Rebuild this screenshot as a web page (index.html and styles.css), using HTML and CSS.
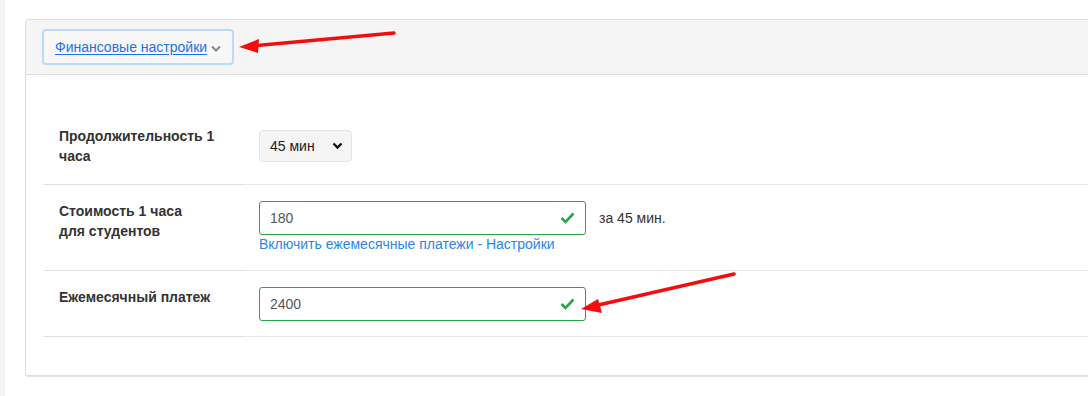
FILE: index.html
```html
<!DOCTYPE html>
<html lang="ru">
<head>
    <meta charset="UTF-8">
    <title>Финансовые настройки</title>
    <link rel="stylesheet" href="styles.css">
</head>
<body>

    <div class="strip"></div>

    <div class="main">
        <div class="card">
            <div class="card-header">
                <button class="toggle">
                    <span class="toggle-text">Финансовые настройки</span>
                    <svg class="toggle-caret" width="10" height="7" viewBox="0 0 10 7"><path d="M1 1.5 L5 5.5 L9 1.5" fill="none" stroke="#888" stroke-width="2"/></svg>
                </button>
            </div>

            <div class="card-body">
                <table class="settings">
                    <tr class="first">
                        <th>Продолжительность 1<br>часа</th>
                        <td>
                            <div class="select">
                                <span>45 мин</span>
                                <svg width="11" height="8" viewBox="0 0 11 8"><path d="M1.5 1.5 L5.5 5.5 L9.5 1.5" fill="none" stroke="#111" stroke-width="2.4"/></svg>
                            </div>
                        </td>
                    </tr>
                    <tr>
                        <th>Стоимость 1 часа<br>для студентов</th>
                        <td>
                            <div class="field-line">
                                <div class="field">
                                    <span>180</span>
                                    <svg class="check" width="15" height="12" viewBox="0 0 15 12"><path d="M1.5 6 L5.5 10 L13.5 1.5" fill="none" stroke="#28a745" stroke-width="2.6"/></svg>
                                </div>
                                <span class="suffix">за 45 мин.</span>
                            </div>
                            <a class="hint" href="#">Включить ежемесячные платежи - Настройки</a>
                        </td>
                    </tr>
                    <tr class="last">
                        <th>Ежемесячный платеж</th>
                        <td>
                            <div class="field">
                                <span>2400</span>
                                <svg class="check" width="15" height="12" viewBox="0 0 15 12"><path d="M1.5 6 L5.5 10 L13.5 1.5" fill="none" stroke="#28a745" stroke-width="2.6"/></svg>
                            </div>
                        </td>
                    </tr>
                </table>
            </div>
        </div>
    </div>

    <!-- annotation arrows -->
    <svg class="arrows" width="1088" height="396" viewBox="0 0 1088 396">
        <line x1="394" y1="33" x2="252" y2="46" stroke="#f40d0d" stroke-width="3.5" stroke-linecap="round"/>
        <polygon points="239,47 259,39 258,53" fill="#f40d0d"/>
        <line x1="734" y1="274" x2="594" y2="306" stroke="#f40d0d" stroke-width="3.5" stroke-linecap="round"/>
        <polygon points="581,309 598,299 602,313" fill="#f40d0d"/>
    </svg>

</body>
</html>
```

FILE: styles.css
```css
body {
    margin: 0;
    font-family: 'Liberation Sans', Arial, sans-serif;
    font-size: 14px;
    color: #333;
    background: #fff;
    display: flex;
    height: 396px;
    overflow: hidden;
}
.strip {
    width: 5px;
    background: #f4f4f4;
    flex-shrink: 0;
}
.main {
    flex: 1;
    padding: 19px 0 0 20px;
}
.card {
    margin-right: -10px;
    border: 1px solid #ddd;
    border-radius: 3px;
    box-shadow: 0 1px 0 #e4e4e4;
}
.card-header {
    height: 55px;
    box-sizing: border-box;
    padding: 9px 16px;
    background: #f5f5f5;
    border-bottom: 1px solid #ddd;
}
.toggle {
    display: flex;
    align-items: center;
    height: 36px;
    width: 192px;
    box-sizing: border-box;
    padding: 0 0 0 11px;
    border: 2px solid #b9dafa;
    border-radius: 4px;
    background: #f7f7f7;
    font: inherit;
    white-space: nowrap;
    cursor: pointer;
}
.toggle-text {
    color: #1a73e8;
    text-decoration: underline;
    text-underline-offset: 2px;
    font-size: 14px;
}
.toggle-caret {
    flex-shrink: 0;
    margin-left: 4px;
    margin-top: 2px;
}
.card-body {
    padding: 36px 0 38px 18px;
}
.settings {
    width: 100%;
    border-collapse: collapse;
}
.settings th,
.settings td {
    padding: 16px 0 16px;
    border-bottom: 1px solid #e8e8e8;
    line-height: 20px;
}
.settings th {
    width: 199px;
    box-sizing: border-box;
    padding-left: 15px;
    text-align: left;
    vertical-align: top;
    font-weight: bold;
    color: #333;
    border-bottom-color: #dedede;
}
.settings td {
    padding-left: 16px;
    vertical-align: middle;
}
.settings tr.first th,
.settings tr.first td {
    padding-top: 15px;
    padding-bottom: 18px;
}
.settings tr.last th,
.settings tr.last td {
    padding-bottom: 15px;
}
.select {
    display: flex;
    align-items: center;
    justify-content: space-between;
    width: 93px;
    height: 32px;
    box-sizing: border-box;
    padding: 0 8px 0 10px;
    background: #f5f5f5;
    border: 1px solid #e4e4e4;
    border-radius: 4px;
    color: #222;
}
.field-line {
    display: flex;
    align-items: center;
}
.field {
    display: flex;
    align-items: center;
    justify-content: space-between;
    width: 327px;
    height: 34px;
    box-sizing: border-box;
    padding: 0 10px 0 10px;
    border: 1px solid #28a745;
    border-radius: 3px;
    color: #555;
}
.suffix {
    margin-left: 13px;
    color: #333;
}
.hint {
    display: block;
    line-height: 19px;
    color: #2a86e8;
    text-decoration: none;
}
.arrows {
    position: absolute;
    left: 0;
    top: 0;
    pointer-events: none;
}
```
